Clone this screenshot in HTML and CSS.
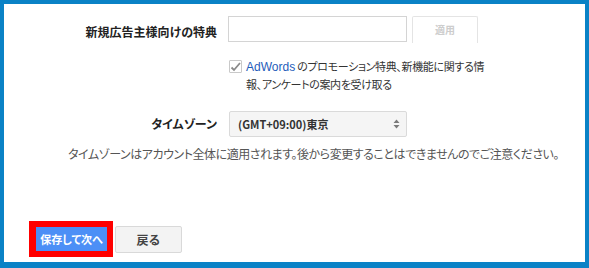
FILE: index.html
```html
<!DOCTYPE html>
<html lang="ja">
<head>
<meta charset="utf-8">
<link rel="stylesheet" href="styles.css">
</head>
<body>
<div class="frame">
  <div class="row row-promo">
    <label class="label" for="promo">新規広告主様向けの特典</label>
    <div class="controls">
      <input id="promo" class="text-input" type="text">
      <button class="apply-btn" type="button">適用</button>
    </div>
  </div>
  <div class="row row-check">
    <div class="label"></div>
    <div class="check">
      <span class="checkbox">
        <svg width="11" height="10" viewBox="0 0 11 10"><path d="M1.5 5.5 L4 8 L10 1" fill="none" stroke="#8a8a8a" stroke-width="1.8"/></svg>
      </span>
      <span class="check-text"><span class="brand">AdWords</span> のプロモーション特典、新機能に関する情<br>報、アンケートの案内を受け取る</span>
    </div>
  </div>
  <div class="row row-tz">
    <div class="label">タイムゾーン</div>
    <div class="select">
      <span class="select-value">(GMT+09:00)東京</span>
      <svg class="select-arrows" width="7" height="10" viewBox="0 0 7 10"><path d="M3.5 0.5 L6.5 4 L0.5 4 Z M0.5 6 L6.5 6 L3.5 9.5 Z" fill="#7a7a7a"/></svg>
    </div>
  </div>
  <p class="help">タイムゾーンはアカウント全体に適用されます。後から変更することはできませんのでご注意ください。</p>
  <div class="actions">
    <div class="highlight"><button class="primary-btn" type="button">保存して次へ</button></div>
    <button class="secondary-btn" type="button">戻る</button>
  </div>
</div>
</body>
</html>
```
FILE: styles.css
```css
html, body {
  margin: 0;
  padding: 0;
  background: #ffffff;
}
body {
  font-family: "Noto Sans CJK JP", "Liberation Sans", sans-serif;
  font-feature-settings: "palt";
  color: #333;
}
.frame {
  width: 589px;
  height: 268px;
  box-sizing: border-box;
  border-style: solid;
  border-color: #0a82c6;
  border-width: 4px 4px 6px 4px;
  background: #fff;
  display: flex;
  flex-direction: column;
  padding-top: 12px;
  padding-bottom: 5px;
}
.row {
  display: grid;
  grid-template-columns: 213px 1fr;
  column-gap: 11px;
  align-items: center;
}
.label {
  text-align: right;
  font-size: 12px;
  font-weight: bold;
  color: #222;
  line-height: 16px;
}
.row-promo .label {
  padding-top: 4px;
}
.controls {
  display: flex;
  gap: 5px;
}
.text-input {
  width: 179px;
  height: 26px;
  box-sizing: border-box;
  border: 1px solid #d4d4d4;
  margin: 0;
  padding: 0 6px;
  font: inherit;
}
.apply-btn {
  width: 66px;
  height: 27px;
  box-sizing: border-box;
  border: 1px solid #e4e4e4;
  border-bottom: none;
  border-radius: 2px 2px 0 0;
  background: #fff;
  color: #cdcdcd;
  font: bold 10px "Noto Sans CJK JP", sans-serif;
  padding: 0 0 2px;
  margin: 0;
}
.row-check {
  margin-top: 15px;
  align-items: start;
}
.check {
  display: flex;
  align-items: flex-start;
  gap: 4px;
}
.checkbox {
  width: 13px;
  height: 13px;
  box-sizing: border-box;
  border: 1px solid #c9c9c9;
  border-radius: 1px;
  margin-top: 2px;
  margin-left: 1px;
  display: flex;
  align-items: center;
  justify-content: center;
  flex: none;
}
.check-text {
  font-size: 11px;
  line-height: 17px;
  color: #333;
  letter-spacing: -0.35px;
}
.brand {
  color: #1f5dba;
  font-family: "Liberation Sans", sans-serif;
  font-size: 12px;
  letter-spacing: 0;
}
.row-tz {
  margin-top: 18px;
}
.select {
  width: 178px;
  height: 26px;
  box-sizing: border-box;
  margin-left: 1px;
  border: 1px solid #dadada;
  border-radius: 2px;
  background: #f5f5f5;
  display: flex;
  align-items: center;
  justify-content: space-between;
  padding: 0 6px 0 8px;
}
.select-value {
  font-size: 11px;
  font-weight: bold;
  color: #333;
}
.help {
  margin: 8px 0 0 64px;
  font-size: 12px;
  line-height: 17px;
  color: #555;
  letter-spacing: -0.45px;
}
.actions {
  margin-top: auto;
  margin-left: 25px;
  display: flex;
  align-items: center;
  gap: 2px;
}
.highlight {
  border: 6px solid #ff0000;
  border-left-width: 7px;
  display: flex;
}
.primary-btn {
  width: 71px;
  height: 24px;
  border: none;
  margin: 0;
  padding: 0;
  background: #4c8ff6;
  color: #fff;
  font: bold 11px "Noto Sans CJK JP", sans-serif;
  font-feature-settings: "palt";
}
.secondary-btn {
  width: 67px;
  height: 27px;
  box-sizing: border-box;
  border: 1px solid #d9d9d9;
  border-radius: 2px;
  margin: 0;
  padding: 0;
  background: #f3f3f3;
  color: #444;
  font: bold 12px "Noto Sans CJK JP", sans-serif;
}
```
